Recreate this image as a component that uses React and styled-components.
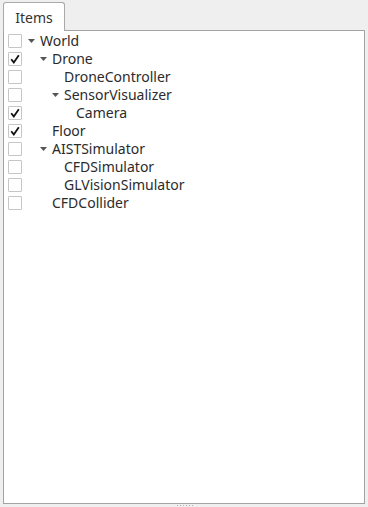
import React from 'react'
import styled, { createGlobalStyle } from 'styled-components'

const GlobalStyle = createGlobalStyle`
    html, body {
        margin: 0;
        padding: 0;
        background: #efefef;
    }
    body {
        font-family: 'Noto Sans', 'Open Sans', sans-serif;
        color: #2e2e2e;
    }
`

const items = [
    { label: 'World', level: 0, open: true, checked: false },
    { label: 'Drone', level: 1, open: true, checked: true },
    { label: 'DroneController', level: 2, checked: false },
    { label: 'SensorVisualizer', level: 2, open: true, checked: false },
    { label: 'Camera', level: 3, checked: true },
    { label: 'Floor', level: 1, checked: true },
    { label: 'AISTSimulator', level: 1, open: true, checked: false },
    { label: 'CFDSimulator', level: 2, checked: false },
    { label: 'GLVisionSimulator', level: 2, checked: false },
    { label: 'CFDCollider', level: 1, checked: false },
]

const Window = styled.div`
    width: 368px;
    height: 507px;
    box-sizing: border-box;
    padding: 2px 3px 0 3px;
    display: flex;
    flex-direction: column;
    position: relative;
`

const TabBar = styled.div`
    display: flex;
    height: 28px;
    position: relative;
    z-index: 1;
`

const Tab = styled.div`
    box-sizing: border-box;
    width: 62px;
    height: 29px;
    border: 1px solid #a9a9a9;
    border-bottom: none;
    border-radius: 3px 3px 0 0;
    background: #ffffff;
    display: flex;
    align-items: center;
    justify-content: center;
    font-size: 14px;
    color: #333;
`

const Panel = styled.div`
    box-sizing: border-box;
    height: 474px;
    border: 1px solid #a3a3a3;
    background: #ffffff;
    padding-top: 1px;
`

const Row = styled.div`
    display: flex;
    align-items: center;
    height: 18px;
    padding-left: 4px;
`

const Check = styled.span`
    box-sizing: border-box;
    width: 14px;
    height: 14px;
    border: 1px solid #c6c6c6;
    border-radius: 1px;
    background: #fff;
    display: flex;
    align-items: center;
    justify-content: center;
    flex-shrink: 0;
`

const Indent = styled.span`
    flex-shrink: 0;
    width: ${(p) => 4 + p.$level * 12}px;
`

const Branch = styled.span`
    width: 14px;
    flex-shrink: 0;
    display: flex;
    align-items: center;
    padding-left: 2px;
    box-sizing: border-box;
`

const Label = styled.span`
    font-size: 14px;
    line-height: 18px;
    white-space: nowrap;
    color: #2b2b2b;
`

const Grip = styled.div`
    position: absolute;
    bottom: 1px;
    left: 177px;
    display: flex;
    gap: 2px;
    span {
        width: 1px;
        height: 1px;
        background: #b0b0b0;
    }
`

const Tick = () => (
    <svg width="10" height="10" viewBox="0 0 10 10">
        <path d="M1.2 5.2 L3.8 8.4 L8.8 1.2" fill="none" stroke="#111" strokeWidth="1.8" />
    </svg>
)

const Arrow = () => (
    <svg width="7" height="4" viewBox="0 0 7 4">
        <path d="M0 0 H7 L3.5 4 Z" fill="#555" />
    </svg>
)

const App = () => {
    return (
        <Window>
            <GlobalStyle />
            <TabBar>
                <Tab>Items</Tab>
            </TabBar>
            <Panel>
                {items.map((it) => (
                    <Row key={it.label}>
                        <Check>{it.checked && <Tick />}</Check>
                        <Indent $level={it.level} />
                        <Branch>{it.open && <Arrow />}</Branch>
                        <Label>{it.label}</Label>
                    </Row>
                ))}
            </Panel>
            <Grip>
                {[0, 1, 2, 3, 4, 5].map((i) => <span key={i} />)}
            </Grip>
        </Window>
    )
}

export default App
